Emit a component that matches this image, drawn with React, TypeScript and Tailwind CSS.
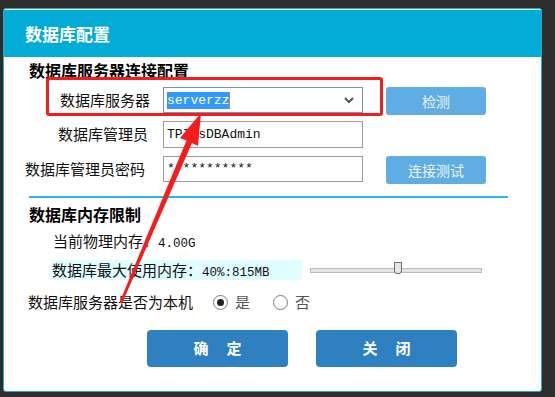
import { useState } from "react"

const cjk = { fontFamily: '"Noto Sans CJK SC", "Noto Sans", sans-serif' }
const mono = { fontFamily: '"Liberation Mono", "Noto Sans CJK SC", monospace' }

function Radio({ checked, label }: { checked: boolean; label: string }) {
  return (
    <span className="flex items-center">
      <span className="w-[15px] h-[15px] rounded-full border border-[#7a7a7a] bg-white flex items-center justify-center">
        {checked && <span className="w-[7px] h-[7px] rounded-full bg-[#222]" />}
      </span>
      <span className="ml-[7px] text-[15px] leading-[20px] text-[#555]">{label}</span>
    </span>
  )
}

export default function App() {
  const [local, setLocal] = useState(true)

  return (
    <div className="relative w-[555px] h-[397px] overflow-hidden bg-[#2d2d2d] pt-[8px] pl-[3px]" style={cjk}>
      <div className="w-[539px] h-[384px] bg-white border border-[#2fa8c8] rounded-[3px] overflow-hidden flex flex-col">
        {/* Title bar */}
        <div className="h-[48px] shrink-0 bg-[#02acd6] border-t border-[#e6f6fb] flex items-center pl-[21px] text-white text-[17px] font-bold">
          数据库配置
        </div>

        {/* Connection section */}
        <div className="mt-[3px] pl-[25px] text-[16px] leading-[20px] font-bold text-black">数据库服务器连接配置</div>

        <div className="mt-[7px] flex items-start">
          <div className="w-[146px] h-[26px] flex items-center justify-end text-[15px] text-[#111]">数据库服务器</div>
          <div className="ml-[13px] w-[200px] h-[26px] border border-[#7594bd] flex items-center pl-[3px] pr-[8px]">
            <span className="bg-[#3399ff] text-white text-[13px] leading-[17px] border-r border-[#d08a2a]" style={mono}>
              serverzz
            </span>
            <svg className="ml-auto" width="10" height="7" viewBox="0 0 10 7">
              <polyline points="1,1 5,5 9,1" fill="none" stroke="#555" strokeWidth="2" />
            </svg>
          </div>
          <button className="ml-[23px] w-[100px] h-[28px] rounded-[3px] bg-[#5fade2] text-[#eaf5fc] text-[14px]">检测</button>
        </div>

        <div className="mt-[6px] flex items-start">
          <div className="w-[144px] h-[26px] flex items-center justify-end text-[15px] text-[#111]">数据库管理员</div>
          <div className="ml-[15px] w-[200px] h-[27px] border border-[#9c9c9c] flex items-center pl-[3px] text-[13px] text-[#111]" style={mono}>
            TPlusDBAdmin
          </div>
        </div>

        <div className="mt-[8px] flex items-start">
          <div className="w-[141px] h-[26px] flex items-center justify-end text-[15px] text-[#111]">数据库管理员密码</div>
          <div className="ml-[18px] w-[200px] h-[26px] border border-[#9c9c9c] flex items-center pl-[3px] text-[13px] text-[#111]" style={mono}>
            ***********
          </div>
          <button className="ml-[23px] w-[100px] h-[28px] rounded-[3px] bg-[#5fade2] text-[#eaf5fc] text-[14px]">连接测试</button>
        </div>

        <div className="mt-[12px] ml-[25px] w-[479px] h-[2px] bg-[#2cb6e0]" />

        {/* Memory section */}
        <div className="mt-[6px] pl-[25px] text-[16px] leading-[20px] font-bold text-black">数据库内存限制</div>
        <div className="mt-[7px] pl-[49px] text-[15px] leading-[20px] text-[#111]">
          当前物理内存：<span className="text-[12.5px]" style={mono}>4.00G</span>
        </div>
        <div className="mt-[6px] flex items-center">
          <div className="ml-[47px] w-[251px] h-[20px] bg-[#e0fdff] pl-[1px] text-[15px] leading-[20px] text-[#111]">
            数据库最大使用内存：<span className="text-[12.5px]" style={mono}>40%:815MB</span>
          </div>
          <div className="relative ml-[8px] w-[172px] h-[5px] bg-[#e4e4e4] border border-[#bdbdbd]">
            <div className="absolute left-[83px] top-[-7px] w-[8px] h-[12px] bg-[#e6e6e6] border border-[#6a6a6a] rounded-b-[3px]" />
          </div>
        </div>

        <div className="mt-[12px] flex items-center pl-[24px]">
          <span className="text-[15px] leading-[20px] text-[#111]">数据库服务器是否为本机</span>
          <span className="ml-[20px] flex items-center gap-[23px]">
            <span onClick={() => setLocal(true)}>
              <Radio checked={local} label="是" />
            </span>
            <span onClick={() => setLocal(false)}>
              <Radio checked={!local} label="否" />
            </span>
          </span>
        </div>

        <div className="mt-[18px] ml-[143px] flex gap-[28px]">
          <button className="w-[141px] h-[37px] rounded-[4px] bg-[#2f80c1] text-white text-[15px] font-bold flex items-center justify-center gap-[18px]">
            <span>确</span>
            <span>定</span>
          </button>
          <button className="w-[141px] h-[37px] rounded-[4px] bg-[#2f80c1] text-white text-[15px] font-bold flex items-center justify-center gap-[18px]">
            <span>关</span>
            <span>闭</span>
          </button>
        </div>
      </div>

      {/* Annotation: red box */}
      <div className="absolute left-[46px] top-[77px] w-[337px] h-[39px] border-[3px] border-[#f41c1c] rounded-[3px]" />

      {/* Annotation: red arrow */}
      <svg className="absolute left-0 top-0 pointer-events-none" width="555" height="397" viewBox="0 0 555 397">
        <polygon
          points="201,113 198,146 192,143 122,303.5 119.5,302.5 186.5,140.5 180,138"
          fill="#f41c1c"
        />
      </svg>
    </div>
  )
}
